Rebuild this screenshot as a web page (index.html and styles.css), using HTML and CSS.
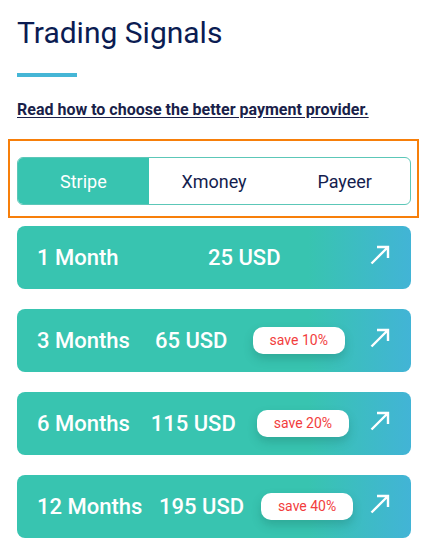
FILE: index.html
```html
<!DOCTYPE html>
<html lang="en">
<head>
<meta charset="utf-8">
<title>Trading Signals</title>
<link rel="stylesheet" href="styles.css">
</head>
<body>
<div class="page">
  <h1 class="title">Trading Signals</h1>
  <div class="title-bar"></div>
  <a class="help-link" href="#">Read how to choose the better payment provider.</a>

  <div class="provider-focus">
    <div class="tabs">
      <div class="tab tab-active">Stripe</div>
      <div class="tab">Xmoney</div>
      <div class="tab">Payeer</div>
    </div>
  </div>

  <div class="plans">
    <div class="plan">
      <span class="plan-period">1 Month</span>
      <span class="plan-price">25 USD</span>
      <svg class="plan-arrow" viewBox="0 0 20 20" width="20" height="20" aria-hidden="true"><path d="M1.5 18.5 L18 2 M7 2 H18 V13" fill="none" stroke="#fff" stroke-width="2.4" stroke-linecap="butt" stroke-linejoin="miter"/></svg>
    </div>
    <div class="plan">
      <span class="plan-period">3 Months</span>
      <span class="plan-price">65 USD</span>
      <span class="plan-badge">save 10%</span>
      <svg class="plan-arrow" viewBox="0 0 20 20" width="20" height="20" aria-hidden="true"><path d="M1.5 18.5 L18 2 M7 2 H18 V13" fill="none" stroke="#fff" stroke-width="2.4" stroke-linecap="butt" stroke-linejoin="miter"/></svg>
    </div>
    <div class="plan">
      <span class="plan-period">6 Months</span>
      <span class="plan-price">115 USD</span>
      <span class="plan-badge">save 20%</span>
      <svg class="plan-arrow" viewBox="0 0 20 20" width="20" height="20" aria-hidden="true"><path d="M1.5 18.5 L18 2 M7 2 H18 V13" fill="none" stroke="#fff" stroke-width="2.4" stroke-linecap="butt" stroke-linejoin="miter"/></svg>
    </div>
    <div class="plan">
      <span class="plan-period">12 Months</span>
      <span class="plan-price">195 USD</span>
      <span class="plan-badge">save 40%</span>
      <svg class="plan-arrow" viewBox="0 0 20 20" width="20" height="20" aria-hidden="true"><path d="M1.5 18.5 L18 2 M7 2 H18 V13" fill="none" stroke="#fff" stroke-width="2.4" stroke-linecap="butt" stroke-linejoin="miter"/></svg>
    </div>
  </div>
</div>
</body>
</html>
```
FILE: styles.css
```css
* { box-sizing: border-box; }

html, body {
  margin: 0;
  padding: 0;
  background: #ffffff;
}

body {
  font-family: Roboto, "Liberation Sans", Arial, sans-serif;
  color: #0f1d4d;
}

.page {
  width: 394px;
  margin-left: 17px;
  padding-top: 15px;
}

.title {
  margin: 0;
  font-size: 30px;
  line-height: 36px;
  font-weight: 400;
  color: #0b1c52;
}

.title-bar {
  width: 60px;
  height: 4px;
  margin-top: 22px;
  background: #45b6d6;
}

.help-link {
  display: block;
  margin-top: 23px;
  font-size: 16px;
  line-height: 19px;
  font-weight: 700;
  color: #1a1f4a;
  text-decoration: underline;
  text-underline-offset: 2px;
}

.provider-focus {
  margin: 20px -8px 0 -9px;
  border: 2px solid #f77f0a;
  padding: 16px 6px 11px 7px;
}

.tabs {
  display: flex;
  height: 48px;
  border: 1px solid #5cc7b8;
  border-radius: 6px;
  overflow: hidden;
}

.tab {
  flex: 1;
  display: flex;
  align-items: center;
  justify-content: center;
  font-size: 18px;
  color: #141d4e;
}

.tab-active {
  background: #38c4b0;
  color: #ffffff;
}

.plans {
  margin-top: 8px;
  display: flex;
  flex-direction: column;
  gap: 20px;
}

.plan {
  height: 63px;
  padding: 0 20px;
  border-radius: 8px;
  background: linear-gradient(90deg, #38c4b0 0%, #38c4b0 74%, #42b4d6 100%);
  display: flex;
  align-items: center;
  justify-content: space-between;
  color: #ffffff;
}

.plan-period,
.plan-price {
  font-size: 22px;
  font-weight: 500;
}

.plan-badge {
  background: #ffffff;
  color: #f23d3d;
  font-size: 14px;
  line-height: 17px;
  padding: 5px 17px;
  border-radius: 10px;
  box-shadow: 0 5px 10px rgba(20, 90, 80, 0.25);
}

.plan-arrow {
  display: block;
  margin-bottom: 6px;
  margin-right: 1px;
}
```
